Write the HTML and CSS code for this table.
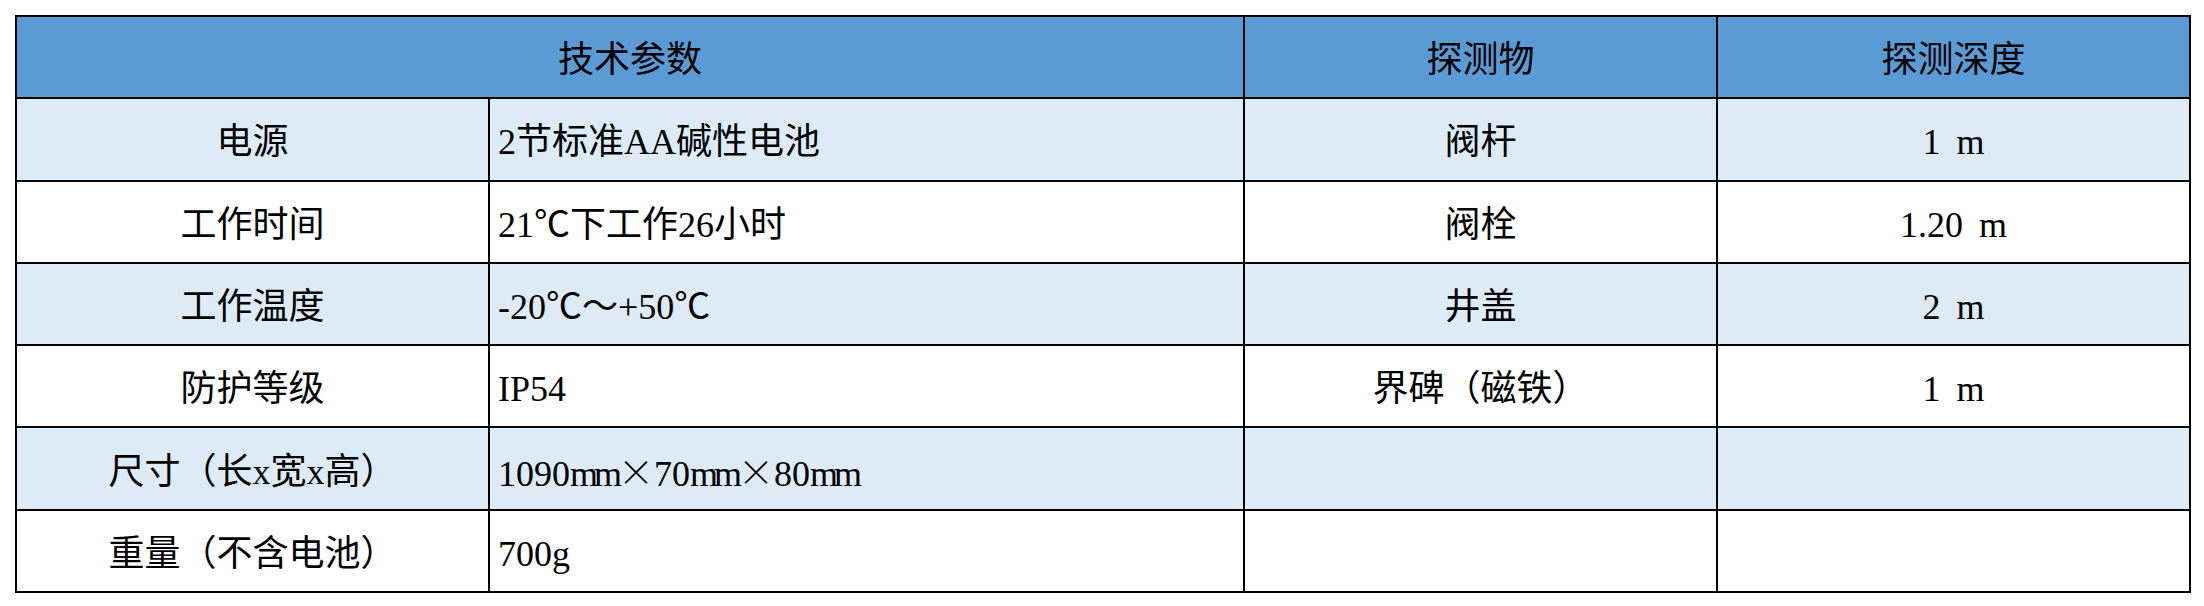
FILE: index.html
```html
<!DOCTYPE html>
<html lang="zh-CN">
<head>
<meta charset="utf-8">
<title>技术参数</title>
<link rel="stylesheet" href="styles.css">
</head>
<body>
<table class="spec">
  <colgroup>
    <col class="c-name">
    <col class="c-value">
    <col class="c-target">
    <col class="c-depth">
  </colgroup>
  <thead>
    <tr class="head">
      <th colspan="2">技术参数</th>
      <th>探测物</th>
      <th>探测深度</th>
    </tr>
  </thead>
  <tbody>
    <tr class="tint">
      <td class="center">电源</td>
      <td class="left">2节标准AA碱性电池</td>
      <td class="center">阀杆</td>
      <td class="center depth">1 m</td>
    </tr>
    <tr>
      <td class="center">工作时间</td>
      <td class="left">21℃下工作26小时</td>
      <td class="center">阀栓</td>
      <td class="center depth">1.20 m</td>
    </tr>
    <tr class="tint">
      <td class="center">工作温度</td>
      <td class="left">-20℃～+50℃</td>
      <td class="center">井盖</td>
      <td class="center depth">2 m</td>
    </tr>
    <tr>
      <td class="center">防护等级</td>
      <td class="left">IP54</td>
      <td class="center">界碑（磁铁）</td>
      <td class="center depth">1 m</td>
    </tr>
    <tr class="tint">
      <td class="center">尺寸（长x宽x高）</td>
      <td class="left">1090<span class="unit">mm</span><span class="cjk">×</span>70<span class="unit">mm</span><span class="cjk">×</span>80<span class="unit">mm</span></td>
      <td class="center"></td>
      <td class="center"></td>
    </tr>
    <tr>
      <td class="center">重量（不含电池）</td>
      <td class="left">700g</td>
      <td class="center"></td>
      <td class="center"></td>
    </tr>
  </tbody>
</table>
</body>
</html>
```
FILE: styles.css
```css
html, body {
  margin: 0;
  padding: 0;
  background: #ffffff;
}

body {
  padding: 15px;
  font-family: "Liberation Serif", "Noto Sans CJK SC", serif;
  color: #000000;
}

.spec {
  border-collapse: collapse;
  table-layout: fixed;
  width: 2174px;
  font-size: 36px;
  font-weight: normal;
  line-height: 1;
}

.c-name { width: 473px; }
.c-value { width: 755px; }
.c-target { width: 473px; }
.c-depth { width: 473px; }

.spec tr {
  height: 82.3px;
}

.spec th,
.spec td {
  border: 2px solid #000000;
  padding: 6px 8px 0 8px;
  font-weight: normal;
  vertical-align: middle;
  white-space: nowrap;
}

.head th {
  background: #5b9bd5;
  text-align: center;
}

.tint td {
  background: #ddebf7;
}

.center {
  text-align: center;
}

.left {
  text-align: left;
}

.depth {
  word-spacing: 0.2em;
}

.unit {
  letter-spacing: -4px;
}

.cjk {
  font-family: "Noto Sans CJK SC", sans-serif;
  font-weight: 300;
}
```
